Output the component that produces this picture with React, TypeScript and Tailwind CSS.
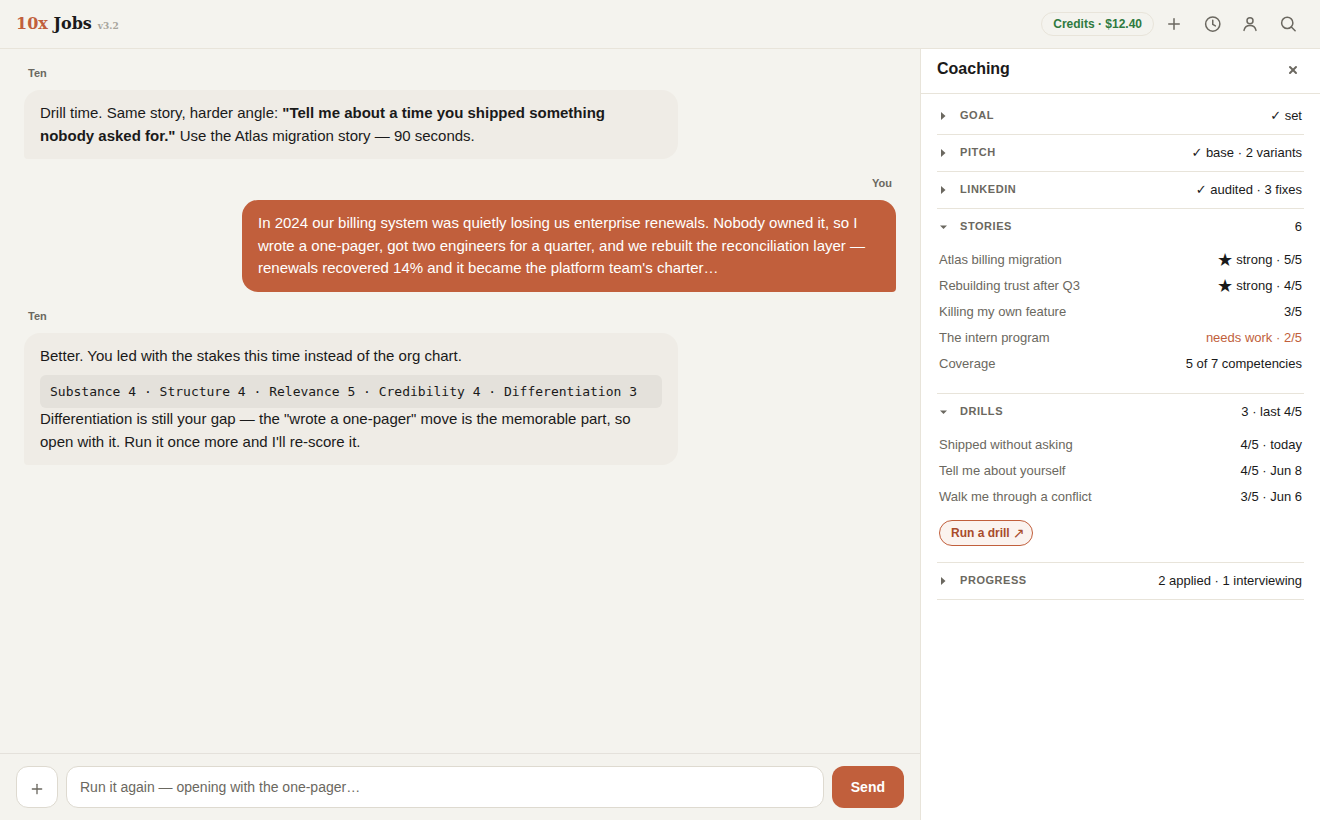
import { useState } from "react";
import type { ReactNode } from "react";
import { Plus, X } from "lucide-react";

type Row = { label: string; value: ReactNode; warn?: boolean };

const stories: Row[] = [
  { label: "Atlas billing migration", value: <><Star /> strong · 5/5</> },
  { label: "Rebuilding trust after Q3", value: <><Star /> strong · 4/5</> },
  { label: "Killing my own feature", value: "3/5" },
  { label: "The intern program", value: "needs work · 2/5", warn: true },
  { label: "Coverage", value: "5 of 7 competencies" },
];

const drills: Row[] = [
  { label: "Shipped without asking", value: "4/5 · today" },
  { label: "Tell me about yourself", value: "4/5 · Jun 8" },
  { label: "Walk me through a conflict", value: "3/5 · Jun 6" },
];

function Star() {
  return <span className="font-['DejaVu_Sans'] text-lg leading-none">★</span>;
}

function Check() {
  return <span className="font-['DejaVu_Sans'] leading-none font-bold">✓</span>;
}

function Icon({ children }: { children: ReactNode }) {
  return (
    <svg
      width="18"
      height="18"
      viewBox="0 0 24 24"
      fill="none"
      stroke="currentColor"
      strokeWidth="2"
      strokeLinecap="round"
      strokeLinejoin="round"
    >
      {children}
    </svg>
  );
}

function IconButton({ label, children }: { label: string; children: ReactNode }) {
  return (
    <button aria-label={label} className="flex size-8 items-center justify-center text-[#6b6860]">
      {children}
    </button>
  );
}

function Message({ from, children }: { from: "Ten" | "You"; children: ReactNode }) {
  const mine = from === "You";
  return (
    <div className={`flex flex-col gap-2 ${mine ? "items-end" : "items-start"}`}>
      <div className="px-1 text-[11px] leading-[17px] font-bold text-[#6b6860]">{from}</div>
      <div
        className={`w-3/4 rounded-2xl px-4 py-3 text-[15px] leading-normal ${
          mine ? "rounded-br-sm bg-[#c15f3c] text-white" : "rounded-bl-sm bg-[#efece6]"
        }`}
      >
        {children}
      </div>
    </div>
  );
}

function Section({
  title,
  summary,
  defaultOpen = false,
  children,
}: {
  title: string;
  summary: ReactNode;
  defaultOpen?: boolean;
  children?: ReactNode;
}) {
  const [open, setOpen] = useState(defaultOpen);

  return (
    <section className="border-b border-[#e8e4da]">
      <button
        onClick={() => setOpen(!open)}
        aria-expanded={open}
        className="flex h-9 w-full items-center pr-0.5 pl-[3px] text-left"
      >
        <svg width="8" height="8" viewBox="0 0 8 8" fill="#6b6860">
          {open ? <path d="M0 2.500h7L3.500 6z" /> : <path d="M1 0v8l4.500-4z" />}
        </svg>
        <span className="ml-3 pb-0.5 text-[11px] font-bold tracking-wider text-[#6b6860] uppercase">{title}</span>
        <span className="ml-auto text-[13px]">{summary}</span>
      </button>
      {open && children && <div className="px-0.5 pt-0.5 pb-4">{children}</div>}
    </section>
  );
}

function Rows({ rows }: { rows: Row[] }) {
  return (
    <dl>
      {rows.map(row => (
        <div key={row.label} className="flex h-[26px] items-center justify-between text-[13px]">
          <dt className="text-[#6b6860]">{row.label}</dt>
          <dd className={`flex items-center gap-[3px] ${row.warn ? "text-[#c15f3c]" : ""}`}>{row.value}</dd>
        </div>
      ))}
    </dl>
  );
}

export default function App() {
  const [draft, setDraft] = useState("");

  return (
    <div className="flex h-screen flex-col bg-[#f4f3ee] font-['Liberation_Sans',Arial,sans-serif] text-[#1a1a1a]">
      {/* Top bar */}
      <header className="flex h-[49px] shrink-0 items-center border-b border-[#e8e4da] px-4">
        <h1 className="flex items-baseline gap-1.5 font-['DejaVu_Serif',serif] text-base font-bold">
          <span>
            <span className="text-[#c15f3c]">10x</span> Jobs
          </span>
          <span className="text-[9px] text-[#a8a59c]">v3.2</span>
        </h1>
        <div className="ml-auto flex items-center gap-1">
          <button className="h-6 rounded-full border border-[#e8e4da] px-[11px] text-xs font-bold text-[#2f7a3f]">
            Credits · $12.40
          </button>
          <div className="flex gap-1.5">
            <IconButton label="New chat"><Plus size={18} /></IconButton>
            <IconButton label="History">
              <Icon>
                <circle cx="13" cy="12" r="9.500" />
                <path d="M13 7v5.500l3.500 2" />
              </Icon>
            </IconButton>
            <IconButton label="Account">
              <Icon>
                <circle cx="12" cy="7.500" r="4" />
                <path d="M4 20.500c1-4.500 4.200-6.500 8-6.500s7 2 8 6.500" />
              </Icon>
            </IconButton>
            <IconButton label="Search">
              <Icon>
                <circle cx="11" cy="10.500" r="7.500" />
                <path d="m16.500 16 5 5" />
              </Icon>
            </IconButton>
          </div>
        </div>
      </header>

      <div className="flex min-h-0 flex-1">
        {/* Chat */}
        <main className="flex min-w-0 flex-1 flex-col">
          <div className="flex flex-1 flex-col gap-4 overflow-y-auto px-6 pt-4">
            <Message from="Ten">
              Drill time. Same story, harder angle:{" "}
              <strong>"Tell me about a time you shipped something nobody asked for."</strong> Use the Atlas migration
              story — 90 seconds.
            </Message>
            <Message from="You">
              In 2024 our billing system was quietly losing us enterprise renewals. Nobody owned it, so I wrote a
              one-pager, got two engineers for a quarter, and we rebuilt the reconciliation layer — renewals recovered
              14% and it became the platform team's charter…
            </Message>
            <Message from="Ten">
              <p>Better. You led with the stakes this time instead of the org chart.</p>
              <p className="mt-2 rounded-md bg-[#e4e1db] px-2.5 py-1.5 font-['DejaVu_Sans_Mono',monospace] text-[13px] leading-[21px]">
                Substance 4 · Structure 4 · Relevance 5 · Credibility 4 · Differentiation 3
              </p>
              <p>
                Differentiation is still your gap — the "wrote a one-pager" move is the memorable part, so open with
                it. Run it once more and I'll re-score it.
              </p>
            </Message>
          </div>

          {/* Composer */}
          <form
            onSubmit={e => e.preventDefault()}
            className="flex gap-2 border-t border-[#e4e1db] px-4 py-3"
          >
            <button
              type="button"
              aria-label="Attach"
              className="flex size-[42px] items-center justify-center rounded-xl border border-[#dedad0] bg-white pt-1 text-[#6b6860]"
            >
              <Plus size={16} strokeWidth={2} />
            </button>
            <input
              aria-label="Message"
              value={draft}
              onChange={e => setDraft(e.target.value)}
              placeholder="Run it again — opening with the one-pager…"
              className="h-[42px] min-w-0 flex-1 rounded-xl border border-[#dedad0] bg-white px-[13px] text-sm outline-none placeholder:text-[#6b6860]"
            />
            <button className="h-[42px] rounded-xl bg-[#c15f3c] px-[19px] text-sm font-bold text-white">Send</button>
          </form>
        </main>

        {/* Coaching panel */}
        <aside className="w-[400px] shrink-0 border-l border-[#e8e4da] bg-white">
          <div className="flex h-[45px] items-center justify-between border-b border-[#e8e4da] px-4 pb-0.5">
            <h2 className="pb-0.5 text-base font-bold">Coaching</h2>
            <button aria-label="Close" className="p-[5px] text-[#6b6860]">
              <X size={12} strokeWidth={4} />
            </button>
          </div>
          <div className="px-4 pt-1">
            <Section title="Goal" summary={<><Check /> set</>} />
            <Section title="Pitch" summary={<><Check /> base · 2 variants</>} />
            <Section title="LinkedIn" summary={<><Check /> audited · 3 fixes</>} />
            <Section title="Stories" summary="6" defaultOpen>
              <Rows rows={stories} />
            </Section>
            <Section title="Drills" summary="3 · last 4/5" defaultOpen>
              <Rows rows={drills} />
              <button className="mt-2.5 flex h-[26px] items-center gap-[3px] rounded-full border border-[#c15f3c] bg-[#fbf3ef] pr-2 pl-[11px] text-xs font-bold text-[#a84b2b]">
                Run a drill <span className="font-['DejaVu_Sans'] text-sm leading-none font-normal">↗</span>
              </button>
            </Section>
            <Section title="Progress" summary="2 applied · 1 interviewing" />
          </div>
        </aside>
      </div>
    </div>
  );
}
